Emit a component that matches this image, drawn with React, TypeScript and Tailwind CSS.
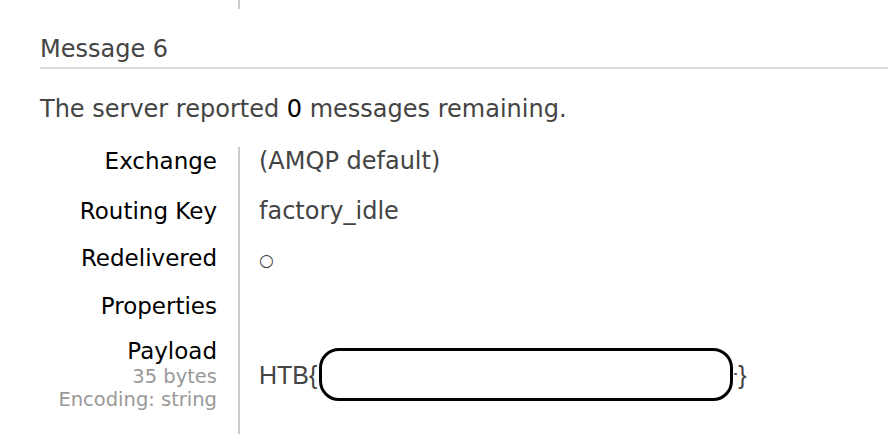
const rows = [
  { label: 'Exchange', value: '(AMQP default)', h: 'h-[50px]' },
  { label: 'Routing Key', value: 'factory_idle', h: 'h-[47px]' },
  { label: 'Redelivered', value: '○', h: 'h-[48px]' },
  { label: 'Properties', value: '', h: 'h-[45px]' },
];

export default function App() {
  return (
    <div className="w-[888px] h-[444px] overflow-hidden bg-white font-['DejaVu_Sans',Verdana,sans-serif] text-[24px] leading-[28px] text-[#444]">
      <div className="ml-[238px] w-[2px] h-[9px] bg-[#ccc]" />

      <div className="ml-[40px] mt-[26px]">
        <h3 className="pb-[4px] border-b-2 border-[#ddd]">Message 6</h3>
        <p className="mt-[26px]">
          The server reported <span className="text-black">0</span> messages remaining.
        </p>

        <div className="mt-[24px] flex flex-col">
          {rows.map((r) => (
            <div key={r.label} className={`flex ${r.h}`}>
              <div className="w-[198px] shrink-0 pr-[21px] text-right text-[23px] text-black">{r.label}</div>
              <div className="border-l-2 border-[#ccc] pl-[19px]">
                {r.value === '○' ? <span className="text-[17px] text-[#444]">○</span> : r.value}
              </div>
            </div>
          ))}
          <div className="flex h-[97px]">
            <div className="w-[198px] shrink-0 pr-[21px] text-right">
              <div className="text-[23px] text-black">Payload</div>
              <div className="text-[19.5px] leading-[23px] text-[#999]">35 bytes</div>
              <div className="text-[19.5px] leading-[24px] text-[#999]">Encoding: string</div>
            </div>
            <div className="border-l-2 border-[#ccc] pl-[19px]">
              <div className="mt-[11px] flex h-[53px] items-center font-['Liberation_Sans',Arial,sans-serif] text-[25px]">
                <span>HTB&#123;</span>
                <span className="ml-[2px] inline-block h-[53px] w-[414px] rounded-[20px] border-[3px] border-black bg-white" />
                <span className="ml-[1px] mb-[2px] inline-block h-[2px] w-[3px] bg-[#666]" />
                <span className="ml-[1px]">&#125;</span>
              </div>
            </div>
          </div>
        </div>
      </div>
    </div>
  );
}
